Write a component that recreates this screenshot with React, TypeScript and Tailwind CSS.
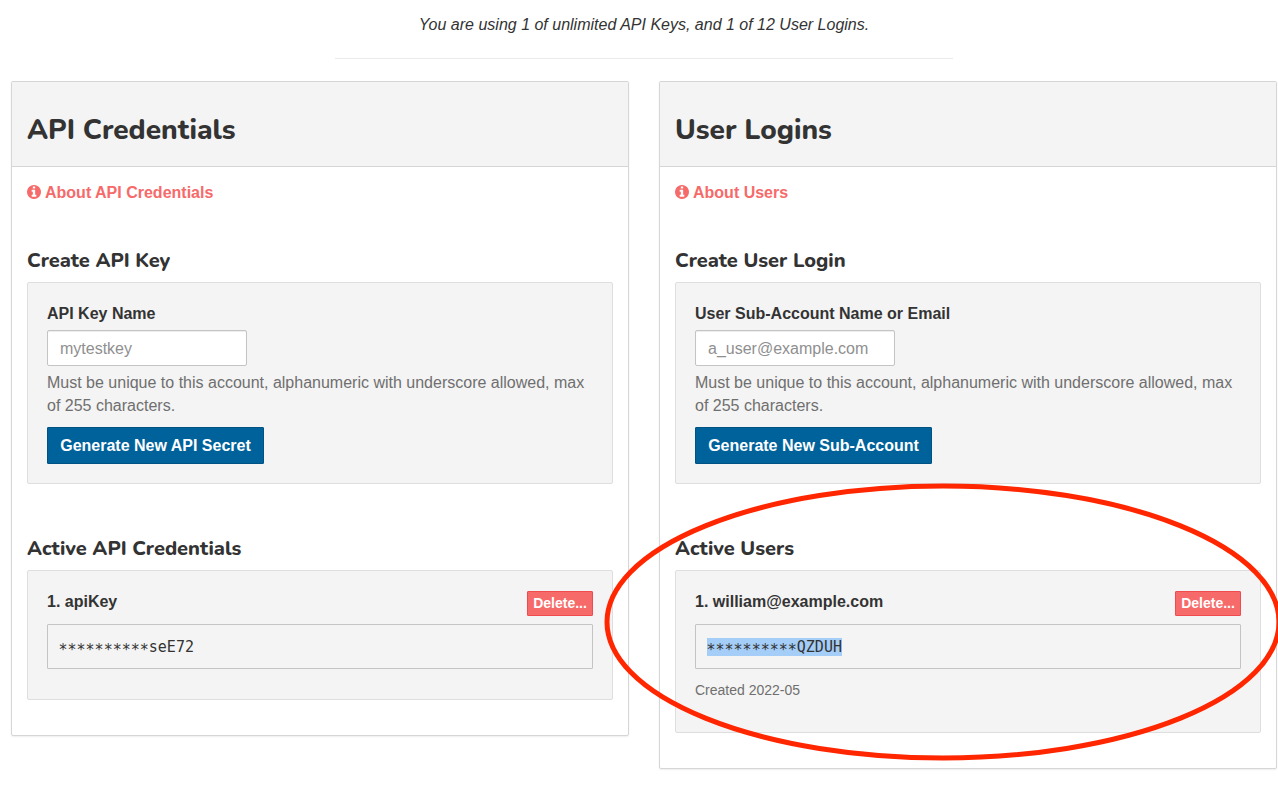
import type { ReactNode } from "react";

function InfoIcon() {
  return (
    <svg viewBox="0 0 1536 1536" fill="currentColor" className="mb-px size-[14px] shrink-0" aria-hidden="true">
      <path d="M1024 1248v-160q0-14-9-23t-23-9h-96v-512q0-14-9-23t-23-9h-320q-14 0-23 9t-9 23v160q0 14 9 23t23 9h96v320h-96q-14 0-23 9t-9 23v160q0 14 9 23t23 9h448q14 0 23-9t9-23zM896 352v-160q0-14-9-23t-23-9h-192q-14 0-23 9t-9 23v160q0 14 9 23t23 9h192q14 0 23-9t9-23zM1536 768q0 209-103 385.5t-279.5 279.5-385.5 103-385.5-103-279.5-279.5-103-385.5 103-385.5 279.5-279.5 385.5-103 385.5 103 279.5 279.5 103 385.5z" />
    </svg>
  );
}

type PanelProps = { title: string; about: string; children: ReactNode };

function Panel({ title, about, children }: PanelProps) {
  return (
    <section className="flex-1 rounded-[2px] border border-[#d6d6d6] bg-white pb-[35px] shadow-[0_1px_2px_rgba(0,0,0,0.07)]">
      <header className="h-[85px] border-b border-[#d6d6d6] bg-[#f4f4f4] px-[15px] pt-[32px]">
        <h2 className="w-fit font-['Nunito','Lato',sans-serif] text-[28px] leading-[32px] font-extrabold whitespace-nowrap">{title}</h2>
      </header>
      <div className="px-[15px] pt-[14px]">
        <a href="#" className="flex h-[23px] items-center gap-1 font-bold text-[#f66a6a]">
          <InfoIcon />
          <span className="pt-[2px]">{about}</span>
        </a>
        {children}
      </div>
    </section>
  );
}

function SectionTitle({ text, className }: { text: string; className: string }) {
  return (
    <h3 className={`w-fit font-['Nunito','Lato',sans-serif] text-[20px] leading-[24px] font-extrabold whitespace-nowrap ${className}`}>{text}</h3>
  );
}

type CreateFormProps = { label: string; placeholder: string; action: string; buttonClass: string };

function CreateForm({ label, placeholder, action, buttonClass }: CreateFormProps) {
  return (
    <form className="mt-[9px] h-[202px] rounded-[2px] border border-[#dedede] bg-[#f4f4f4] p-[19px]">
      <label className="block h-[28px] pt-px font-bold">{label}</label>
      <input
        type="text"
        placeholder={placeholder}
        className="block h-[36px] w-[200px] rounded-[2px] border border-[#c4c4c4] bg-white px-3 pt-[2px] shadow-[inset_0_1px_1px_rgba(0,0,0,0.075)] placeholder:text-[#8f8f8f]"
      />
      <p className="mt-[6px] mb-[9px] h-[46px] text-[#6f6f6f]">
        Must be unique to this account, alphanumeric with underscore allowed, max of 255 characters.
      </p>
      <button
        type="button"
        className={`block h-[37px] rounded-[1px] border border-[#005282] bg-[#00629b] pt-[2px] text-center font-bold whitespace-nowrap text-white ${buttonClass}`}
      >
        {action}
      </button>
    </form>
  );
}

type EntryProps = { name: string; mask: string; suffix: string; selected?: boolean; created?: string };

function Entry({ name, mask, suffix, selected, created }: EntryProps) {
  return (
    <div className={`mt-[9px] rounded-[2px] border border-[#dedede] bg-[#f4f4f4] p-[19px] ${created ? "h-[163px]" : "h-[130px]"}`}>
      <div className="flex h-[34px] items-start justify-between">
        <span className="pt-px font-bold">{name}</span>
        <button
          type="button"
          className="mt-px h-[25px] w-[66px] rounded-[1px] border border-[#f04b4f] bg-[#f66a6a] text-center text-[14px] leading-[21px] font-bold text-white"
        >
          Delete...
        </button>
      </div>
      <pre className="flex h-[45px] items-center rounded-[1px] border border-[#c4c4c4] px-[10.5px] font-['DejaVu_Sans_Mono',monospace] text-[15px] leading-[18px]">
        <span className={selected ? "bg-[#a4cdf8]" : ""}>
          <span className="relative top-[3px]">{mask}</span>
          {suffix}
        </span>
      </pre>
      {created && <p className="mt-[11px] text-[14px] leading-[20px] text-[#6f6f6f]">{created}</p>}
    </div>
  );
}

export default function App() {
  return (
    <main className="relative h-[790px] w-[1278px] overflow-hidden bg-white font-['Liberation_Sans',Arial,sans-serif] text-[16px] leading-[22.857px] text-[#333]">
      <p className="h-[58px] pt-[14px] pl-[10px] text-center italic">
        You are using 1 of unlimited API Keys, and 1 of 12 User Logins.
      </p>
      <hr className="ml-[335px] w-[618px] border-t border-[#ebebeb]" />
      <div className="mt-[22px] flex items-start gap-[30px] pr-px pl-[11px]">
        <Panel title="API Credentials" about="About API Credentials">
          <SectionTitle text="Create API Key" className="mt-[45px]" />
          <CreateForm label="API Key Name" placeholder="mytestkey" action="Generate New API Secret" buttonClass="w-[217px]" />
          <SectionTitle text="Active API Credentials" className="mt-[53px]" />
          <Entry name="1. apiKey" mask="**********" suffix="seE72" />
        </Panel>
        <Panel title="User Logins" about="About Users">
          <SectionTitle text="Create User Login" className="mt-[45px]" />
          <CreateForm
            label="User Sub-Account Name or Email"
            placeholder="a_user@example.com"
            action="Generate New Sub-Account"
            buttonClass="w-[237px]"
          />
          <SectionTitle text="Active Users" className="mt-[53px]" />
          <Entry name="1. william@example.com" mask="**********" suffix="QZDUH" selected created="Created 2022-05" />
        </Panel>
      </div>
      <svg className="pointer-events-none absolute inset-0" width="1278" height="790" viewBox="0 0 1278 790" fill="none">
        <ellipse cx="943" cy="622" rx="336" ry="136" stroke="#ff2600" strokeWidth="5" />
      </svg>
    </main>
  );
}
